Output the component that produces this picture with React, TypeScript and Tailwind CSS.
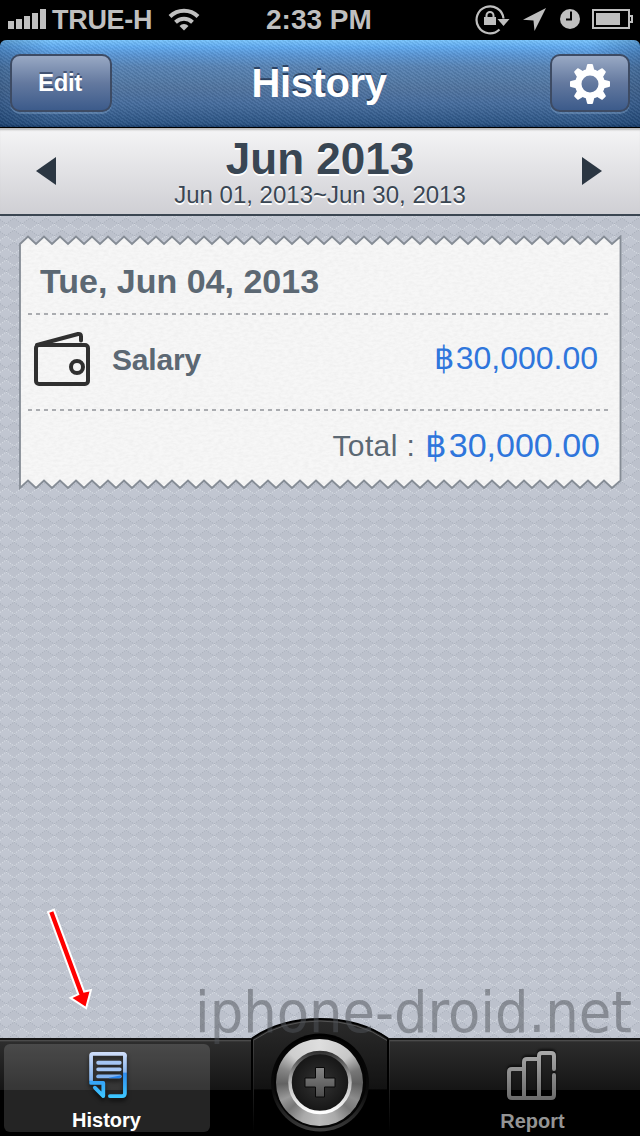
import React from "react";

const zigTop = Array.from({ length: 37 }, (_, i) => `L${9 + i * 16} 1.5 L${17 + i * 16} 9`).join(" ");
const zigBottom = Array.from({ length: 37 }, (_, i) => 36 - i)
  .map((i) => `L${17 + i * 16} 253 L${9 + i * 16} 245.5`)
  .join(" ");
const receiptPath = `M1 9 ${zigTop} L601.5 1.5 L601.5 245.5 ${zigBottom} L1 253 Z`;

function StatusBar() {
  return (
    <div className="flex h-10 shrink-0 items-center bg-black text-[28px] font-bold text-[#bfbfbf]">
      <div className="flex w-[266px] items-center pl-2">
        <svg className="mb-0.5" width="38" height="20" viewBox="0 0 38 20" fill="#bfbfbf">
          <path d="M0 12h6v8H0zM8 10h6v10H8zM16 7h6v13h-6zM24 4h6v16h-6zM32 0h6v20h-6z" />
        </svg>
        <span className="ml-1.5 w-[100px] whitespace-nowrap text-[27px] tracking-[-0.3px]">TRUE-H</span>
        <svg className="mb-0.5 ml-4" width="32" height="24" viewBox="0 0 32 24" fill="none" stroke="#bfbfbf" strokeWidth="4">
          <path d="M2 9.5a20 20 0 0 1 28 0" />
          <path d="M7.5 15.2a12.3 12.3 0 0 1 17 0" />
          <path d="M16 23.5l-4.5-4.6a6.5 6.5 0 0 1 9 0z" fill="#bfbfbf" stroke="none" />
        </svg>
      </div>
      <span className="w-[208px] whitespace-nowrap">2:33 PM</span>
      <svg width="166" height="40" viewBox="474 0 166 40" fill="#bfbfbf">
        <path d="M499.5 29.5a13.5 13.5 0 1 1 4-11" fill="none" stroke="#bfbfbf" strokeWidth="2.2" />
        <path d="M497.5 19h12l-6 7z" />
        <path d="M484 17h12v8h-12z" />
        <path d="M486.5 18v-2.500a3.500 3.500 0 0 1 7 0V18" fill="none" stroke="#bfbfbf" strokeWidth="2" />
        <path d="M546 8l-23 11.7 10.5.8 1 10.5z" />
        <circle cx="570" cy="19" r="10" />
        <path d="M571 11.500v8h-5" fill="none" stroke="#000" strokeWidth="2" />
        <rect x="593" y="10" width="36" height="18" fill="none" stroke="#bfbfbf" strokeWidth="2" />
        <path d="M596 13h24v12h-24zM629 15h4v8h-4v-2h2v-4h-2z" />
      </svg>
    </div>
  );
}

const buttonStyle =
  "flex h-[58px] items-center justify-center rounded-[10px] border-2 border-[#3d4b64] bg-linear-to-b from-[#99a9c4] via-[#64799f] to-[#3c5b8b] shadow-[0_2px_0_rgba(150,180,215,0.35)]";

function NavBar() {
  return (
    <div className="h-[88px] shrink-0 bg-black">
      <div className="flex h-[87px] items-start justify-between rounded-t-md bg-[repeating-linear-gradient(35deg,rgba(255,255,255,0.05)_0_1.5px,rgba(0,0,0,0.06)_1.5px_3px),linear-gradient(to_right,rgba(0,30,70,0.25)_0,transparent_50px,transparent_590px,rgba(0,30,70,0.25)_640px),linear-gradient(to_bottom,#78c4fc_0,#60aaf0_7px,#5995d4_15px,#5783b4_27px,#50749f_48px,#456c9d_64px,#2b5484_84px,#173c6a_87px)] px-[10px] pt-3.5">
        <button className={`${buttonStyle} w-[102px] text-2xl font-bold tracking-[-0.3px] text-white [text-shadow:0_-2px_0_rgba(30,45,75,0.6)]`}>
          <span className="mr-0.5">Edit</span>
        </button>
        <h1 className="mr-6 pt-1 text-[40px] leading-[50px] font-bold tracking-[-0.4px] text-white [text-shadow:0_-2px_0_rgba(25,40,65,0.7)]">
          History
        </h1>
        <button className={`${buttonStyle} w-20 pt-0.5`} aria-label="Settings">
          <svg width="40" height="40" viewBox="-20 -20 40 40" fill="#fff">
            <path
              fillRule="evenodd"
              d="M15 0A15 15 0 1 0-15 0A15 15 0 1 0 15 0ZM8.500 0A8.500 8.500 0 1 1-8.500 0A8.500 8.500 0 1 1 8.500 0Z"
            />
            {[0, 45, 90, 135, 180, 225, 270, 315].map((angle) => (
              <path key={angle} transform={`rotate(${angle})`} d="M-4.500-13L-3-19q.2-1 1-1h4q.8 0 1 1l1.500 6z" />
            ))}
          </svg>
        </button>
      </div>
    </div>
  );
}

function MonthBar() {
  return (
    <div className="flex h-[88px] shrink-0 items-center justify-between border-b-2 border-[#3b4652] bg-linear-to-b from-[#f5f5f6] to-[#cfcfd4] px-9 shadow-[inset_0_3px_2px_-1px_#b8b8b8]">
      <svg width="20" height="28" viewBox="0 0 20 28">
        <path d="M0 14L20 0v28z" fill="#2b3642" />
      </svg>
      <div className="pt-[3px] pl-0.5 text-center text-[#394653] [text-shadow:0_2px_0_#fff]">
        <div className="h-[45px] text-[44px] leading-[46px] font-bold">Jun 2013</div>
        <div className="text-2xl leading-7">Jun 01, 2013~Jun 30, 2013</div>
      </div>
      <svg className="mr-0.5" width="20" height="28" viewBox="0 0 20 28">
        <path d="M0 0L20 14 0 28z" fill="#2b3642" />
      </svg>
    </div>
  );
}

function Dashes() {
  return (
    <div className="ml-[9px] h-0.5 w-[580px] bg-[repeating-linear-gradient(to_right,#aaacb0_0_4px,transparent_4px_8px)]" />
  );
}

function Receipt() {
  return (
    <div className="relative mt-[19px] ml-[19px] h-[256px] w-[603px]">
      <svg className="absolute inset-0" width="603" height="256" viewBox="0 0 603 256">
        <defs>
          <filter id="grain" x="0" y="0" width="100%" height="100%">
            <feTurbulence type="fractalNoise" baseFrequency="0.2 0.4" numOctaves="3" result="n" />
            <feColorMatrix in="n" type="matrix" values="0 0 0 0 0.7  0 0 0 0 0.7  0 0 0 0 0.7  0.5 0 0 0 -0.16" />
            <feComposite in2="SourceGraphic" operator="in" result="g" />
            <feMerge>
              <feMergeNode in="SourceGraphic" />
              <feMergeNode in="g" />
            </feMerge>
          </filter>
        </defs>
        <path d={receiptPath} fill="#f7f7f7" filter="url(#grain)" />
        <path d={receiptPath} fill="none" stroke="#858c95" strokeWidth="1.8" />
      </svg>
      <div className="relative">
        <div className="h-[78px] pt-[26px] pl-[21px] text-[34px] leading-10 font-bold text-[#5c6873]">
          Tue, Jun 04, 2013
        </div>
        <Dashes />
        <div className="flex h-[94px] items-center pr-6 pb-1.5 pl-[15px]">
          <svg width="57" height="56" viewBox="0 0 57 56" fill="none" stroke="#303030" strokeWidth="4" strokeLinejoin="round" strokeLinecap="round">
            <rect x="2" y="14" width="52" height="39" rx="3" />
            <path d="M3 14L44 3q3-.5 3 2.500v4" />
            <circle cx="43" cy="36" r="6" />
          </svg>
          <span className="ml-[21px] text-[30px] font-bold tracking-[-0.2px] text-[#5c6873]">Salary</span>
          <span className="mb-0.5 ml-auto text-[32px] text-[#2f76dc]">
            <span className="tracking-[1.5px]">฿</span>30,000.00
          </span>
        </div>
        <Dashes />
        <div className="flex h-[70px] items-center justify-end pr-[22px] pb-0.5">
          <span className="mr-2.5 text-[30px] tracking-[0.4px] text-[#5c6873]">Total :</span>
          <span className="text-[34px] text-[#2f76dc]">
            <span className="tracking-[1.5px]">฿</span>30,000.00
          </span>
        </div>
      </div>
    </div>
  );
}

function TabBar() {
  return (
    <div className="relative flex h-[98px] shrink-0 justify-between border-t-2 border-[#161616] bg-[linear-gradient(to_bottom,#555_0,#2d2d2d_2px,#151515_50px,#000_50px)] px-1 pt-1">
      <div className="flex h-[88px] w-[206px] flex-col items-center rounded-md bg-white/14 pt-[7px]">
        <svg className="ml-px drop-shadow-[0_3px_2px_rgba(0,0,0,0.6)]" width="44" height="50" viewBox="0 0 44 50" fill="none" strokeWidth="4" strokeLinejoin="round" strokeLinecap="round">
          <defs>
            <linearGradient id="doc" x1="0" y1="0" x2="0" y2="50" gradientUnits="userSpaceOnUse">
              <stop offset="0" stopColor="#d3e0fa" />
              <stop offset=".45" stopColor="#8cb8ef" />
              <stop offset=".47" stopColor="#2f8df0" />
              <stop offset="1" stopColor="#3dc8ff" />
            </linearGradient>
            <linearGradient id="docLeft" x1="0" y1="0" x2="0" y2="50" gradientUnits="userSpaceOnUse">
              <stop offset="0" stopColor="#d3e0fa" />
              <stop offset=".62" stopColor="#85b4ee" />
              <stop offset=".64" stopColor="#35a3f8" />
              <stop offset="1" stopColor="#3dc8ff" />
            </linearGradient>
          </defs>
          <path d="M4 32V5q0-2 2-2h32q2 0 2 2" stroke="url(#docLeft)" />
          <path d="M40 5v40q0 3-3 3H24" stroke="url(#doc)" />
          <path d="M4 34h13v14L8 39" stroke="url(#docLeft)" />
          <path d="M11.500 12.500h23M11.500 19.500h23" stroke="#a5c5f3" />
          <path d="M11.500 27h23" stroke="#82b2ee" />
          <path d="M23 28.500L36 25.800V27q-.5 2-2 2H23z" fill="#2583ee" />
        </svg>
        <span className="mt-2.5 mr-px text-xl leading-6 font-bold text-white">History</span>
      </div>
      <div className="flex w-[206px] flex-col items-center pt-[7px]">
        <svg className="mr-0.5 drop-shadow-[0_-2px_1px_rgba(0,0,0,0.6)]" width="52" height="50" viewBox="0 0 52 50" fill="none" stroke="url(#bars)" strokeWidth="4" strokeLinejoin="round" strokeLinecap="round">
          <defs>
            <linearGradient id="bars" x1="0" y1="0" x2="0" y2="50" gradientUnits="userSpaceOnUse">
              <stop offset="0" stopColor="#aaaaaa" />
              <stop offset="1" stopColor="#686868" />
            </linearGradient>
          </defs>
          <path d="M18 18H6q-3 0-3 3v23q0 3 3 3h39q3 0 3-3V24M18 46V11q0-3 3-3h10M33 46V5q0-3 3-3h9q3 0 3 3v13" />
        </svg>
        <span className="mt-2 mr-px text-xl leading-6 font-bold text-[#949494]">Report</span>
      </div>
      <svg className="absolute top-[-22px] left-[248px]" width="144" height="118" viewBox="248 1018 144 118">
        <defs>
          <linearGradient id="hump" x1="0" y1="1018" x2="0" y2="1136" gradientUnits="userSpaceOnUse">
            <stop offset="0" stopColor="#2b2b2b" />
            <stop offset=".6" stopColor="#121212" />
            <stop offset=".61" stopColor="#000" />
          </linearGradient>
          <linearGradient id="sides" x1="0" y1="1038" x2="0" y2="1132" gradientUnits="userSpaceOnUse">
            <stop offset="0" stopColor="#444" />
            <stop offset="1" stopColor="#000" />
          </linearGradient>
          <linearGradient id="well" x1="0" y1="0" x2="0" y2="1">
            <stop offset="0" stopColor="#000" />
            <stop offset=".6" stopColor="#0b0b0b" />
            <stop offset="1" stopColor="#3c3c3c" />
          </linearGradient>
          <linearGradient id="inner" x1="0" y1="0" x2="0" y2="1">
            <stop offset="0" stopColor="#333" />
            <stop offset=".25" stopColor="#777" />
            <stop offset=".5" stopColor="#bbb" />
            <stop offset="1" stopColor="#fff" />
          </linearGradient>
          <radialGradient id="face">
            <stop offset="0" stopColor="#343434" />
            <stop offset="1" stopColor="#151515" />
          </radialGradient>
          <linearGradient id="plus" x1="0" y1="0" x2="0" y2="1">
            <stop offset="0" stopColor="#858585" />
            <stop offset="1" stopColor="#4c4c4c" />
          </linearGradient>
        </defs>
        <path d="M252 1136V1039Q280 1019 320 1019T388 1039V1136z" fill="url(#hump)" />
        <path d="M252 1038.500Q280 1019 320 1019T388 1038.500" fill="none" stroke="#000" strokeWidth="2" />
        <path d="M253 1040.500Q281 1021 320 1021T387 1040.500" fill="none" stroke="#555" />
        <path d="M252 1039v97M388 1039v97" stroke="#000" strokeWidth="2" />
        <path d="M253.500 1040v92M389.500 1040v92" stroke="url(#sides)" />
        <circle cx="320" cy="1082.500" r="49" fill="url(#well)" />
        <circle cx="320" cy="1082" r="46" fill="#050505" />
        <foreignObject x="276" y="1039" width="88" height="88">
          <div className="size-[87px] rounded-full bg-[conic-gradient(#dedede_0deg,#c7c7c7_48deg,#777_72deg,#606060_92deg,#8c8c8c_115deg,#787878_132deg,#aaa_155deg,#bbb_180deg,#aaa_205deg,#777_228deg,#999_245deg,#626262_268deg,#858585_290deg,#cecece_315deg,#dedede_360deg)]" />
        </foreignObject>
        <circle cx="320" cy="1082.500" r="30" fill="url(#face)" stroke="url(#inner)" strokeWidth="3.500" />
        <path d="M315.500 1067.500h9v10.500h10.500v9h-10.500v10h-9v-10h-10.500v-9h10.500z" fill="url(#plus)" stroke="#080808" strokeWidth="1" />
      </svg>
    </div>
  );
}

export default function App() {
  return (
    <div className="relative flex h-[1136px] w-[640px] flex-col overflow-hidden bg-black font-['Liberation_Sans',Arial,sans-serif]">
      <StatusBar />
      <NavBar />
      <MonthBar />
      <main className="relative flex-1 bg-[#bcc1cc]">
        <svg className="absolute inset-0" width="640" height="822">
          <defs>
            <pattern id="weave" x="-2" y="8" width="16" height="12" patternUnits="userSpaceOnUse">
              <path d="M8 0L16 6 8 12 0 6z" fill="#c1c6d1" />
              <path d="M0 6L8 0 16 6" fill="none" stroke="#dfe3ea" strokeWidth="1" strokeDasharray="1.4 1.1" opacity=".8" />
              <path d="M0 6L8 12 16 6" fill="none" stroke="#a0a7b3" strokeWidth="1" strokeDasharray="1.4 1.1" opacity=".7" />
            </pattern>
          </defs>
          <rect width="640" height="822" fill="url(#weave)" />
        </svg>
        <Receipt />
      </main>
      <TabBar />
      <div className="pointer-events-none absolute top-[977px] left-[195px] origin-left scale-x-[1.03] text-[57px] leading-[70px] whitespace-nowrap text-[#50535a]/50 font-['DejaVu_Sans_Condensed','DejaVu_Sans',sans-serif]">
        iphone-droid.net
      </div>
      <svg className="pointer-events-none absolute top-[904px] left-[42px]" width="56" height="112" viewBox="42 904 56 112">
        <path d="M49.300 912.700L53.300 911.200L83.500 992.800L89.500 991.500L85.500 1006.500L72.500 998L79.500 994.800z" fill="#f00" stroke="#fff" strokeWidth="4" paintOrder="stroke" />
      </svg>
    </div>
  );
}
